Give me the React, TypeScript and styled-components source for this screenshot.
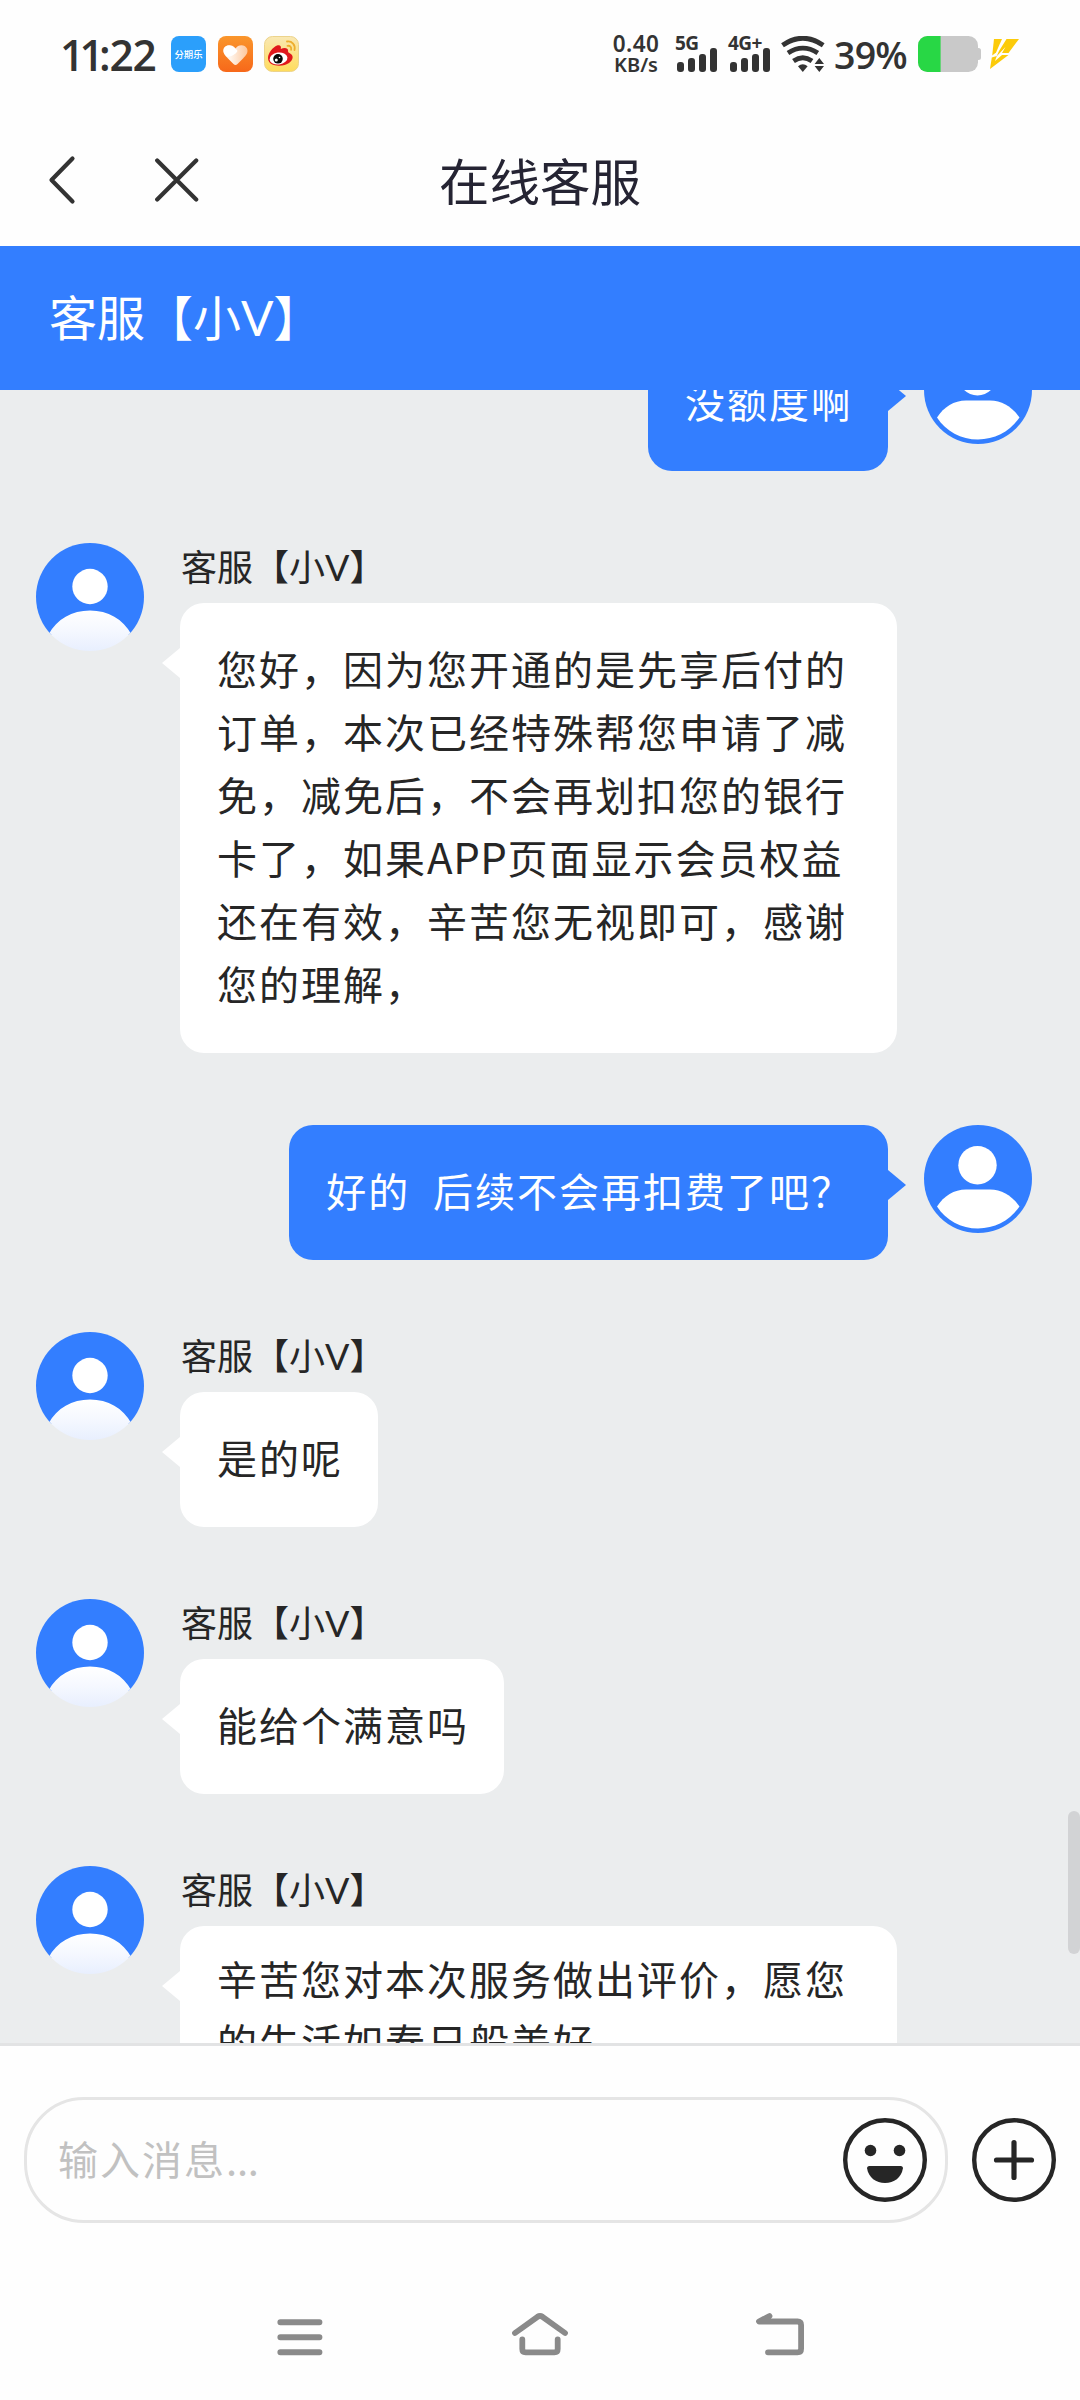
import React from "react";
import styled, { createGlobalStyle, css } from "styled-components";

const BLUE = "#337eff";
const INK = "#262626";
const STATUS_INK = "#333333";

const GlobalStyle = createGlobalStyle`
  * { box-sizing: border-box; }
  html, body { margin: 0; padding: 0; background: #ffffff; }
  body { font-family: "Noto Sans CJK SC", "Noto Sans", sans-serif; color: ${INK}; }
  svg { display: block; flex: none; }
`;

const Screen = styled.div`
  width: 1080px;
  height: 2400px;
  display: flex;
  flex-direction: column;
  background: #fefefe;
  overflow: hidden;
`;

/* ---------- status bar ---------- */

const StatusBar = styled.header`
  height: 108px;
  flex: none;
  display: flex;
  justify-content: space-between;
  padding: 0 60px 0 60px;
  color: ${STATUS_INK};
`;

const StatusGroup = styled.div`
  display: flex;
  align-items: center;
`;

const Clock = styled.div`
  width: 111px;
  padding-top: 2px;
  font: 600 42.5px/60px "Open Sans", "Noto Sans", sans-serif;
  white-space: nowrap;
  letter-spacing: -1.2px;
`;

const Tight = styled.span`
  letter-spacing: -4.8px;
`;

const AppIcons = styled.div`
  display: flex;
  gap: 11.5px;
`;

const NetSpeed = styled.div`
  width: 50px;
  margin-right: 14px;
  text-align: center;
  font-family: "Noto Sans", "Open Sans", sans-serif;
  font-weight: 600;
  white-space: nowrap;
`;

const SpeedValue = styled.div`
  font-size: 22.5px;
  line-height: 22px;
  letter-spacing: 0.4px;
`;

const SpeedUnit = styled.div`
  font-size: 20px;
  line-height: 20px;
`;

const Signal = styled.div<{ $width: number }>`
  width: ${(p) => p.$width}px;
  height: 38px;
  position: relative;
`;

const SignalLabel = styled.div`
  position: absolute;
  left: 0;
  top: 0;
  font: 700 19px/17px "Noto Sans", "Open Sans", sans-serif;
  letter-spacing: -0.6px;
  white-space: nowrap;
`;

const Bars = styled.div`
  height: 100%;
  padding: 0 0 1px 2px;
  display: flex;
  align-items: flex-end;
  gap: 4.5px;
`;

const Bar = styled.i<{ $h: number }>`
  width: 6.5px;
  height: ${(p) => p.$h}px;
  border-radius: 3px;
  background: ${STATUS_INK};
`;

const Percent = styled.div`
  width: 92px;
  padding: 2px 0 0 8px;
  font: 600 37.5px/54px "Open Sans", "Noto Sans", sans-serif;
  letter-spacing: -0.8px;
  white-space: nowrap;
`;

const Bolt = styled.div`
  margin-left: 8px;
`;

/* ---------- title bar ---------- */

const TitleBar = styled.nav`
  height: 138px;
  flex: none;
  display: grid;
  grid-template-columns: 240px 1fr 240px;
  align-items: center;
  padding-top: 6px;
`;

const TitleActions = styled.div`
  display: flex;
  align-items: center;
  gap: 79px;
  padding-left: 48px;
`;

const Title = styled.h1`
  margin: 0;
  padding-bottom: 3px;
  text-align: center;
  font-size: 50.5px;
  line-height: 72px;
  font-weight: 400;
  color: #252433;
`;

const AgentBar = styled.div`
  height: 144px;
  flex: none;
  display: flex;
  align-items: center;
  padding: 0 0 4px 49px;
  background: ${BLUE};
  color: #fff;
  font-size: 48px;
  line-height: 72px;
`;

const Latin = styled.span`
  font-family: Lato, "Open Sans", sans-serif;
`;

const Acronym = styled.span`
  font-size: 42px;
  letter-spacing: 0.6px;
  line-height: 1;
`;

/* ---------- conversation ---------- */

const ChatArea = styled.main`
  height: 1653px;
  flex: none;
  position: relative;
  overflow: hidden;
  background: #ebedee;
`;

const MessageList = styled.div`
  margin-top: -54px;
  display: flex;
  flex-direction: column;
  gap: 72px;
`;

const Row = styled.div<{ $mine?: boolean }>`
  display: flex;
  flex-direction: ${(p) => (p.$mine ? "row-reverse" : "row")};
  align-items: flex-start;
  gap: 36px;
  padding: 0 ${(p) => (p.$mine ? 48 : 36)}px 0 36px;
`;

const MessageBody = styled.div`
  display: flex;
  flex-direction: column;
  align-items: flex-start;
`;

const Sender = styled.div`
  height: 60px;
  padding-left: 1px;
  font-size: 36px;
  line-height: 44px;
  white-space: nowrap;
`;

const Bubble = styled.div<{ $mine?: boolean; $padTop?: number; $full?: boolean }>`
  position: relative;
  width: ${(p) => (p.$full ? "717px" : "auto")};
  padding: ${(p) => p.$padTop ?? 34}px 35px 38px 37px;
  border-radius: 24px;
  font-size: 40px;
  letter-spacing: 2px;
  line-height: 63px;
  white-space: pre;
  background: #fff;

  &::after {
    content: "";
    position: absolute;
    top: 45px;
    left: -18px;
    width: 18px;
    height: 30px;
    background: #fff;
    clip-path: polygon(100% 0, 0 50%, 100% 100%);
  }

  ${(p) =>
    p.$mine &&
    css`
      background: ${BLUE};
      color: #fff;
      word-spacing: 0.4px;

      &::after {
        left: auto;
        right: -18px;
        background: ${BLUE};
        clip-path: polygon(0 0, 100% 50%, 0 100%);
      }
    `}
`;

const ScrollThumb = styled.div`
  position: absolute;
  right: 0;
  top: 1421px;
  width: 12px;
  height: 143px;
  border-radius: 6px;
  background: #d2d3d5;
`;

/* ---------- composer ---------- */

const Composer = styled.footer`
  height: 237px;
  flex: none;
  display: flex;
  align-items: flex-start;
  gap: 24px;
  padding: 51px 24px 0;
  border-top: 3px solid #e2e3e4;
`;

const InputBox = styled.div`
  width: 924px;
  height: 126px;
  display: flex;
  align-items: center;
  justify-content: space-between;
  padding: 0 18px 0 31px;
  border: 3px solid #e5e5e5;
  border-radius: 60px;
`;

const Placeholder = styled.span`
  padding-bottom: 5px;
  font-size: 40px;
  letter-spacing: 2px;
  line-height: 60px;
  color: #c1c1c1;
`;

const Dots = styled.span`
  letter-spacing: -0.2px;
`;

const AddButton = styled.button`
  height: 126px;
  padding: 0;
  border: 0;
  background: none;
  display: flex;
  align-items: center;
`;

const SystemNav = styled.nav`
  flex: 1;
  display: grid;
  grid-template-columns: repeat(3, 240px);
  justify-content: center;
  justify-items: center;
  align-items: start;
  padding-top: 25px;
`;

/* ---------- drawings ---------- */

const FenqileIcon = () => (
  <svg width="35" height="36" viewBox="0 0 35 36">
    <rect width="35" height="36" rx="8" fill="#2b9ffb" />
    <text x="17.5" y="22" textAnchor="middle" fontSize="9.4" fontWeight="500" fill="#fff" fontFamily="Noto Sans CJK SC, sans-serif">
      分期乐
    </text>
  </svg>
);

const HeartIcon = () => (
  <svg width="35" height="36" viewBox="0 0 35 36">
    <defs>
      <linearGradient id="orange" x1="0" y1="0" x2="0" y2="1">
        <stop offset="0" stopColor="#fa962c" />
        <stop offset="1" stopColor="#f7681a" />
      </linearGradient>
      <linearGradient id="heart" x1="0" y1="0" x2="1" y2="0">
        <stop offset="0.3" stopColor="#fff4ea" />
        <stop offset="1" stopColor="#fdc79c" />
      </linearGradient>
    </defs>
    <rect width="35" height="36" rx="8" fill="url(#orange)" />
    <path d="M17.5 12.5C15 8 8 8 6 12.5c-1.6 4 1 7 4 10l5.5 5.5c1.2 1.2 2.800 1.2 4 0l5.500-5.500c3-3 5.600-6 4-10C27 8 20 8 17.500 12.500z" fill="url(#heart)" />
    <path d="M11 9.500C7 9.500 5 12 5.500 15.500c.4 2 1.600 3.500 3.500 5.300C13 21 18 18 19.500 15c-1-2-5-5.500-8.500-5.500z" fill="#fff" />
  </svg>
);

const WeiboIcon = () => (
  <svg width="35" height="36" viewBox="0 0 35 36">
    <defs>
      <linearGradient id="cream" x1="0" y1="0" x2="0" y2="1">
        <stop offset="0" stopColor="#f9e8b4" />
        <stop offset="1" stopColor="#ffdc5c" />
      </linearGradient>
    </defs>
    <rect x=".5" y=".5" width="34" height="35" rx="8" fill="url(#cream)" stroke="#ecd38b" />
    <path d="M4 22c0-5 5-11 9-12.500 3-1 4.500.5 3.800 3.500 3-1.500 7.500-1.500 7.300 2-.1 1 .1 1.500 1.200 2 5 2 4 7-.3 10C20 31 4 31.500 4 22z" fill="#e0171c" />
    <ellipse cx="14.500" cy="22.500" rx="9" ry="6" fill="#fff" transform="rotate(-8 14.500 22.500)" />
    <circle cx="14" cy="22.800" r="4.800" fill="#0b0b0b" />
    <circle cx="12.300" cy="24" r="1.500" fill="#fff" />
    <circle cx="15.500" cy="21.500" r=".8" fill="#fff" />
    <g fill="none" stroke="#eeae2e" strokeWidth="1.800" strokeLinecap="round">
      <path d="M23 5.500c5-.8 8.700 3.500 7.500 8.500" />
      <path d="M23.500 9.800c2.500-.4 4.200 1.500 3.600 4" />
    </g>
  </svg>
);

const WifiIcon = () => (
  <svg width="45" height="36" viewBox="0 0 45 36">
    <g fill="none" stroke={STATUS_INK} strokeWidth="4.800">
      <path d="M1.500 9.200Q21.800-4.800 42.200 9.200" />
      <path d="M7 17Q21.800 7.200 36.800 17" />
      <path d="M12.500 25Q21.800 18.600 31 25" />
    </g>
    <path d="M17 30.200q4.800-4 9.600 0L21.800 36z" fill={STATUS_INK} />
    <path d="M38.300 22l4.700 6h-9.400zM33.600 30h9.400l-4.700 6z" fill={STATUS_INK} />
  </svg>
);

const BatteryIcon = () => (
  <svg width="63" height="36" viewBox="0 0 63 36">
    <defs>
      <clipPath id="cell">
        <rect width="60" height="36" rx="9.500" />
      </clipPath>
    </defs>
    <path d="M59 12h1.500a2.500 2.500 0 0 1 2.500 2.500v7a2.500 2.500 0 0 1-2.500 2.500H59z" fill="#c9c9c9" />
    <g clipPath="url(#cell)">
      <rect width="60" height="36" fill="#c9c9c9" />
      <rect width="22.600" height="36" fill="#28d745" />
    </g>
  </svg>
);

const BoltIcon = () => (
  <svg width="31" height="32" viewBox="0 0 31 32">
    <g fill="#fccb0a">
      <path d="M5 1h8L7 14.500l-3.800 3z" />
      <path d="M17.500 1H30L19.500 15h-6.500l3.500-6L7.500 18.500 10 13z" />
      <path d="M2.800 19.500l5-1.500L6 23l7-6h6.500L1 31z" />
    </g>
  </svg>
);

const BackIcon = () => (
  <svg width="28" height="50" viewBox="0 0 28 50">
    <path d="M24.500 3.500L3.500 25l21 21.500" fill="none" stroke={STATUS_INK} strokeWidth="4.200" strokeLinecap="round" strokeLinejoin="round" />
  </svg>
);

const CloseIcon = () => (
  <svg width="44" height="44" viewBox="0 0 44 44">
    <path d="M2.200 2.500l39 39M41.200 2.500l-39 39" fill="none" stroke={STATUS_INK} strokeWidth="4.200" strokeLinecap="round" />
  </svg>
);

const AgentAvatar = () => (
  <svg width="108" height="108" viewBox="0 0 108 108">
    <defs>
      <clipPath id="agentClip">
        <circle cx="54" cy="54" r="54" />
      </clipPath>
      <linearGradient id="agentBody" x1="0" y1="0" x2="0" y2="1">
        <stop offset="0" stopColor="#ffffff" />
        <stop offset="0.500" stopColor="#f5f8ff" />
        <stop offset="1" stopColor="#e8effe" />
      </linearGradient>
    </defs>
    <g clipPath="url(#agentClip)">
      <path d="M0 0h108v92H0z" fill={BLUE} />
      <path d="M0 108V96l12.500-4.500C21 76 36 67.500 54 67.500S87 76 95.500 91.500L108 96v12z" fill="url(#agentBody)" />
    </g>
    <circle cx="54" cy="43.500" r="17.700" fill="#fff" />
  </svg>
);

const UserAvatar = () => (
  <svg width="108" height="108" viewBox="0 0 108 108">
    <circle cx="54" cy="54" r="54" fill={BLUE} />
    <circle cx="53.500" cy="40.200" r="19.200" fill="#fff" />
    <path d="M13 81.500C20 71 30 64.600 42 64.600h24c12 0 22 6.400 29.500 16.900C86 95.500 71 103.500 54 103.500S22 95.500 13 81.500z" fill="#fff" />
  </svg>
);

const SmileIcon = () => (
  <svg width="84" height="84" viewBox="0 0 84 84">
    <circle cx="42" cy="42" r="39.800" fill="none" stroke={INK} strokeWidth="4.400" />
    <circle cx="27.500" cy="32.500" r="5.800" fill={INK} />
    <circle cx="56.500" cy="32.500" r="5.800" fill={INK} />
    <path d="M26.500 48h31q2.700 0 2.400 2.500C58.500 59.500 51 65 42 65s-16.500-5.500-17.900-14.500Q23.800 48 26.500 48z" fill={INK} />
  </svg>
);

const PlusIcon = () => (
  <svg width="84" height="84" viewBox="0 0 84 84">
    <circle cx="42" cy="42" r="39.800" fill="none" stroke={INK} strokeWidth="4.400" />
    <path d="M24.500 42h35M42 24.500v35" stroke={INK} strokeWidth="5.200" strokeLinecap="round" />
  </svg>
);

const navStroke = {
  fill: "none",
  stroke: "#8a8a8a",
  strokeWidth: 6,
  strokeLinecap: "round" as const,
  strokeLinejoin: "round" as const,
};

const MenuIcon = () => (
  <svg width="60" height="60" viewBox="0 0 60 60">
    <path d="M10.400 17.300h39M10.400 32.300h39M10.400 47.300h39" {...navStroke} />
  </svg>
);

const HomeIcon = () => (
  <svg width="60" height="60" viewBox="0 0 60 60">
    <path d="M5 28L27.500 11.800q2.500-1.600 5 0L55 28M12.300 34.500v9.500q0 3.300 3.300 3.300h28.800q3.300 0 3.300-3.300v-9.500" {...navStroke} strokeWidth={5.800} />
  </svg>
);

const ReturnIcon = () => (
  <svg width="60" height="60" viewBox="0 0 60 60">
    <path d="M19.500 11L9 16.500h38.500q3.600 0 3.600 3.600v23.600q0 3.600-3.600 3.600H18" {...navStroke} strokeWidth={5.800} />
  </svg>
);

/* ---------- content ---------- */

type Message = { from: "agent" | "me"; text: string; padTop?: number; full?: boolean };

const messages: Message[] = [
  { from: "me", text: "没额度啊" },
  {
    from: "agent",
    full: true,
    text:
      "您好，因为您开通的是先享后付的\n订单，本次已经特殊帮您申请了减\n免，减免后，不会再划扣您的银行\n卡了，如果APP页面显示会员权益\n还在有效，辛苦您无视即可，感谢\n您的理解，",
  },
  { from: "me", text: "好的  后续不会再扣费了吧？" },
  { from: "agent", text: "是的呢" },
  { from: "agent", text: "能给个满意吗" },
  { from: "agent", full: true, text: "辛苦您对本次服务做出评价，愿您\n的生活如春日般美好", padTop: 21 },
];

const renderText = (text: string) =>
  text
    .split(/([A-Z]+)/)
    .map((part, i) => (/^[A-Z]+$/.test(part) ? <Acronym key={i}>{part}</Acronym> : part));

const AgentName = () => (
  <>
    客服【小<Latin>V</Latin>】
  </>
);

const CellSignal = ({ label, width }: { label: string; width: number }) => (
  <Signal $width={width}>
    <SignalLabel>{label}</SignalLabel>
    <Bars>
      {[10, 14, 18.5, 24.5].map((h) => (
        <Bar key={h} $h={h} />
      ))}
    </Bars>
  </Signal>
);

export default function App() {
  return (
    <Screen>
      <GlobalStyle />
      <StatusBar>
        <StatusGroup>
          <Clock>
            <Tight>11</Tight>:22
          </Clock>
          <AppIcons>
            <FenqileIcon />
            <HeartIcon />
            <WeiboIcon />
          </AppIcons>
        </StatusGroup>
        <StatusGroup>
          <NetSpeed>
            <SpeedValue>0.40</SpeedValue>
            <SpeedUnit>KB/s</SpeedUnit>
          </NetSpeed>
          <CellSignal label="5G" width={53} />
          <CellSignal label="4G+" width={53} />
          <WifiIcon />
          <Percent>39%</Percent>
          <BatteryIcon />
          <Bolt>
            <BoltIcon />
          </Bolt>
        </StatusGroup>
      </StatusBar>

      <TitleBar>
        <TitleActions>
          <BackIcon />
          <CloseIcon />
        </TitleActions>
        <Title>在线客服</Title>
      </TitleBar>

      <AgentBar>
        <div>
          <AgentName />
        </div>
      </AgentBar>

      <ChatArea>
        <MessageList>
          {messages.map((m, i) => {
            const mine = m.from === "me";
            return (
              <Row key={i} $mine={mine}>
                {mine ? <UserAvatar /> : <AgentAvatar />}
                <MessageBody>
                  {!mine && (
                    <Sender>
                      <AgentName />
                    </Sender>
                  )}
                  <Bubble $mine={mine} $padTop={m.padTop} $full={m.full}>
                    {renderText(m.text)}
                  </Bubble>
                </MessageBody>
              </Row>
            );
          })}
        </MessageList>
        <ScrollThumb />
      </ChatArea>

      <Composer>
        <InputBox>
          <Placeholder>
            输入消息<Dots>...</Dots>
          </Placeholder>
          <SmileIcon />
        </InputBox>
        <AddButton aria-label="更多">
          <PlusIcon />
        </AddButton>
      </Composer>

      <SystemNav>
        <MenuIcon />
        <HomeIcon />
        <ReturnIcon />
      </SystemNav>
    </Screen>
  );
}
